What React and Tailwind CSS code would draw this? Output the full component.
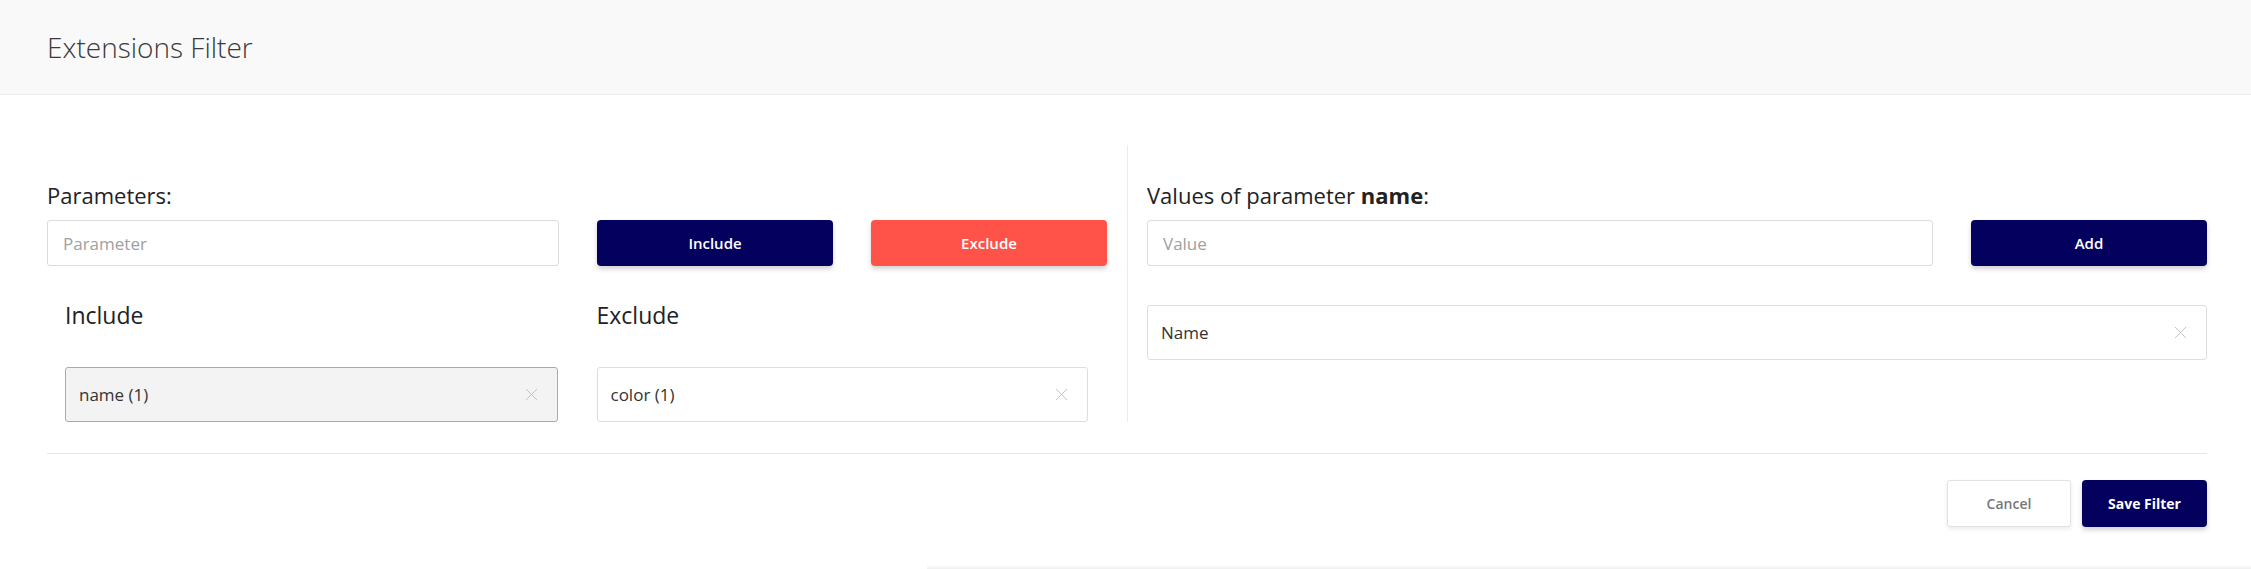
function CloseIcon() {
  return (
    <svg width="13" height="13" viewBox="0 0 13 13" className="text-[#c4c4c4]">
      <path d="M1 1L12 12M12 1L1 12" stroke="currentColor" strokeWidth="1" fill="none" />
    </svg>
  );
}

function TagBox({ label, active, className = "" }) {
  return (
    <div
      className={`flex h-[55px] items-center justify-between rounded-[3px] border pl-[13px] pr-[19px] ${
        active ? "border-[#aaaaaa] bg-[#f3f3f3]" : "border-[#dedede] bg-white"
      } ${className}`}
    >
      <span className="text-[17px] text-[#333]">{label}</span>
      <CloseIcon />
    </div>
  );
}

function ActionButton({ children, color }) {
  return (
    <button
      className={`h-[46px] w-[236px] shrink-0 rounded-[4px] text-[15px] font-semibold text-white shadow-[0_3px_5px_rgba(0,0,0,0.18)] ${color}`}
    >
      {children}
    </button>
  );
}

export default function App() {
  return (
    <div className="h-[569px] overflow-hidden bg-white font-['Open_Sans',sans-serif]">
      <header className="flex h-[95px] items-center border-b border-[#ebebeb] bg-[#f9f9f9] px-[47px]">
        <h1 className="text-[28px] font-light text-[#3a3a3a]">Extensions Filter</h1>
      </header>

      <div className="pl-[47px] pr-[44px] pt-[50px]">
        <div className="flex">
          {/* parameters */}
          <div className="flex-1 pr-[20px]">
            <div className="mt-[35px] text-[22px] leading-[30px] text-[#222]">Parameters:</div>
            <div className="mt-[10px] flex gap-[38px]">
              <input
                className="h-[46px] min-w-0 flex-1 rounded-[3px] border border-[#dcdcdc] px-[15px] text-[17px] placeholder:text-[#a0a0a0] focus:outline-none"
                placeholder="Parameter"
              />
              <ActionButton color="bg-[#04005e]">Include</ActionButton>
              <ActionButton color="bg-[#ff5249]">Exclude</ActionButton>
            </div>
            <div className="mt-[34px] grid grid-cols-2 gap-[39px]">
              <div className="pl-[18px]">
                <div className="text-[23px] leading-[30px] text-[#222]">Include</div>
                <TagBox label="name (1)" active className="mt-[37px]" />
              </div>
              <div className="pr-[19px]">
                <div className="text-[23px] leading-[30px] text-[#222]">Exclude</div>
                <TagBox label="color (1)" className="mt-[37px]" />
              </div>
            </div>
          </div>

          <div className="w-px bg-[#ececec]" />

          {/* values */}
          <div className="flex-1 pl-[19px]">
            <div className="mt-[35px] text-[22px] leading-[30px] text-[#222]">
              Values of parameter <b className="font-bold">name</b>:
            </div>
            <div className="mt-[10px] flex gap-[38px]">
              <input
                className="h-[46px] min-w-0 flex-1 rounded-[3px] border border-[#dcdcdc] px-[15px] text-[17px] placeholder:text-[#a0a0a0] focus:outline-none"
                placeholder="Value"
              />
              <ActionButton color="bg-[#04005e]">Add</ActionButton>
            </div>
            <TagBox label="Name" className="mt-[39px] h-[54px]" />
          </div>
        </div>

        <div className="mt-[31px] border-t border-[#e6e6e6]" />

        <div className="mt-[26px] flex justify-end gap-[11px]">
          <button className="h-[47px] w-[124px] rounded-[3px] border border-[#e2e2e2] bg-white text-[14px] font-semibold text-[#777] shadow-[0_2px_4px_rgba(0,0,0,0.08)]">
            Cancel
          </button>
          <button className="h-[47px] w-[125px] rounded-[4px] bg-[#04005e] text-[14px] font-bold text-white shadow-[0_3px_5px_rgba(0,0,0,0.18)]">
            Save Filter
          </button>
        </div>
      </div>

      <div className="ml-[927px] mt-[38px] h-[4px] bg-gradient-to-b from-white to-[#efefef]" />
    </div>
  );
}
